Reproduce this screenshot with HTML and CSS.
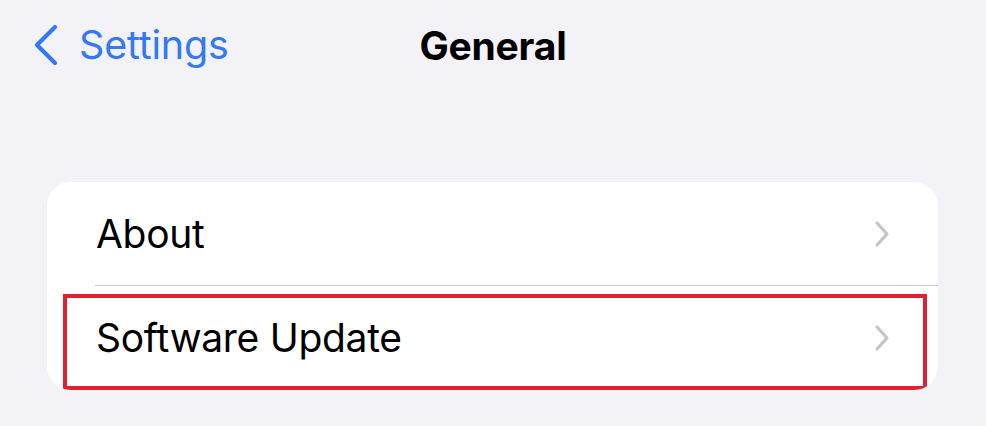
FILE: index.html
```html
<!DOCTYPE html>
<html lang="en">
<head>
<meta charset="utf-8">
<title>General</title>
<link rel="stylesheet" href="styles.css">
</head>
<body>
<div class="page">
  <header class="nav">
    <a class="back" href="#">
      <svg class="back-icon" width="26" height="42" viewBox="0 0 26 42" aria-hidden="true">
        <path d="M22 3 L4 21 L22 39" fill="none" stroke="#3478f6" stroke-width="4.2" stroke-linecap="round" stroke-linejoin="round"/>
      </svg>
      <span class="back-label">Settings</span>
    </a>
    <h1 class="title">General</h1>
    <div class="nav-spacer"></div>
  </header>

  <section class="card">
    <div class="row">
      <span class="row-label">About</span>
      <svg class="chev" width="16" height="28" viewBox="0 0 16 28" aria-hidden="true">
        <path d="M3 3 L13 14 L3 25" fill="none" stroke="#c4c4c7" stroke-width="3.2" stroke-linecap="round" stroke-linejoin="round"/>
      </svg>
    </div>
    <div class="row row-sep">
      <span class="row-label">Software Update</span>
      <svg class="chev" width="16" height="28" viewBox="0 0 16 28" aria-hidden="true">
        <path d="M3 3 L13 14 L3 25" fill="none" stroke="#c4c4c7" stroke-width="3.2" stroke-linecap="round" stroke-linejoin="round"/>
      </svg>
    </div>
    <div class="highlight"></div>
  </section>
</div>
</body>
</html>
```

FILE: styles.css
```css
* { box-sizing: border-box; }

html, body {
  margin: 0;
  padding: 0;
  background: #f2f2f7;
}

body {
  font-family: "Inter", "Liberation Sans", sans-serif;
  color: #000;
  width: 986px;
  height: 426px;
  overflow: hidden;
}

.page {
  padding: 0 48px 0 47px;
}

.nav {
  display: grid;
  grid-template-columns: 1fr auto 1fr;
  align-items: center;
  height: 90px;
  margin: 0 -48px 92px -47px;
  padding: 0 33px;
}

.back {
  display: flex;
  align-items: center;
  gap: 20px;
  text-decoration: none;
  color: #3478f6;
}

.back-icon { display: block; }

.back-label {
  font-size: 39.5px;
  font-weight: 400;
  letter-spacing: -0.2px;
}

.title {
  margin: 0;
  font-size: 39px;
  font-weight: 700;
  letter-spacing: -0.2px;
}

.card {
  position: relative;
  background: #fff;
  border-radius: 24px;
  overflow: hidden;
}

.row {
  display: flex;
  align-items: center;
  justify-content: space-between;
  height: 103px;
  padding: 0 48px 0 49px;
}

.row-sep {
  position: relative;
  height: 105px;
}

.row-sep::before {
  content: "";
  position: absolute;
  left: 48px;
  right: 0;
  top: 0;
  height: 1px;
  background: #c8c8cc;
}

.row-label {
  font-size: 39px;
  font-weight: 400;
  letter-spacing: -0.3px;
}

.chev { display: block; }

.highlight {
  position: absolute;
  left: 16px;
  top: 112px;
  width: 864px;
  height: 96px;
  border: 4px solid #e0202e;
}
```
